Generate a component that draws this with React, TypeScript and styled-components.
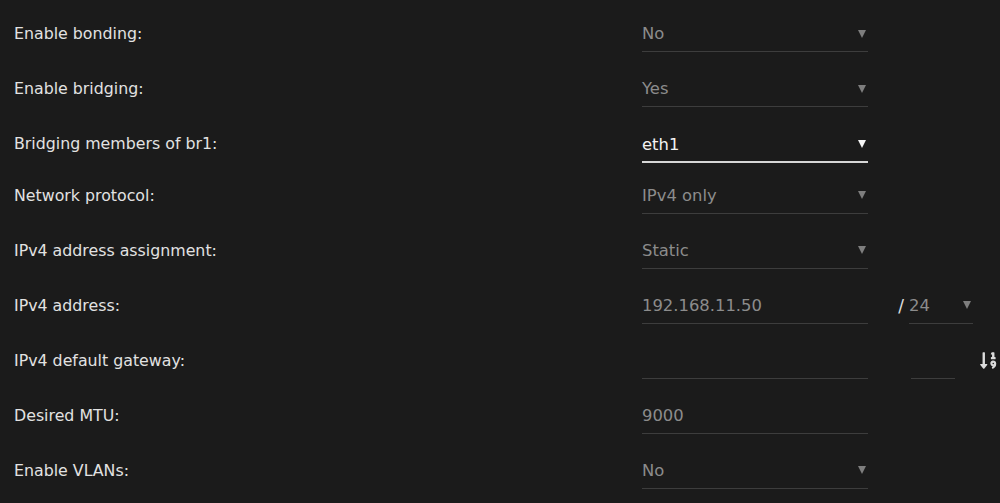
import React from "react";
import styled, { createGlobalStyle } from "styled-components";
import { FaSortNumericDown } from "react-icons/fa";

const Global = createGlobalStyle`
  html, body { margin: 0; padding: 0; background: #1b1b1b; }
  body { font-family: "DejaVu Sans", "Liberation Sans", sans-serif; font-size: 15.8px; }
`;

const Page = styled.div`
  width: 1000px;
  height: 503px;
  padding-top: 16px;
  box-sizing: border-box;
  overflow: hidden;
  display: flex;
  flex-direction: column;
  gap: 19px;
`;

const Row = styled.div<{ $tight?: boolean }>`
  display: flex;
  align-items: flex-end;
  height: 36px;
  flex-shrink: 0;
  margin-bottom: ${(p) => (p.$tight ? "-3.5px" : "0")};
`;

const Label = styled.div`
  width: 642px;
  padding-left: 14px;
  box-sizing: border-box;
  color: #e2e2e2;
  align-self: center;
  margin-top: -1px;
`;

const Field = styled.div<{ $active?: boolean; $width?: number }>`
  width: ${(p) => p.$width ?? 226}px;
  height: 36px;
  box-sizing: border-box;
  display: flex;
  align-items: center;
  justify-content: space-between;
  border-bottom: ${(p) => (p.$active ? "2px solid #d6d6d6" : "1px solid #3d3d3d")};
  color: ${(p) => (p.$active ? "#f2f2f2" : "#8c8c8c")};
  font-size: 16.4px;
  padding-right: 2px;
  margin-bottom: ${(p) => (p.$active ? "-1px" : "0")};
`;

const Arrow = styled.span<{ $active?: boolean }>`
  width: 0;
  height: 0;
  border-left: 4px solid transparent;
  border-right: 4px solid transparent;
  border-top: 8px solid ${(p) => (p.$active ? "#f5f5f5" : "#7e7e7e")};
`;

const Slash = styled.span`
  color: #e0e0e0;
  width: 41px;
  text-align: right;
  padding-right: 5px;
  box-sizing: border-box;
  align-self: center;
  font-size: 17px;
`;

const Spacer = styled.div`
  width: 43px;
`;

const SortIcon = styled.div`
  color: #dcdcdc;
  align-self: center;
  margin-left: 24px;
  display: flex;
  font-size: 19px;
`;

type Item = { label: string; value?: string; select?: boolean; active?: boolean; kind?: string };

const rows: Item[] = [
  { label: "Enable bonding:", value: "No", select: true },
  { label: "Enable bridging:", value: "Yes", select: true },
  { label: "Bridging members of br1:", value: "eth1", select: true, active: true },
  { label: "Network protocol:", value: "IPv4 only", select: true },
  { label: "IPv4 address assignment:", value: "Static", select: true },
  { label: "IPv4 address:", value: "192.168.11.50", kind: "addr" },
  { label: "IPv4 default gateway:", value: "", kind: "gw" },
  { label: "Desired MTU:", value: "9000" },
  { label: "Enable VLANs:", value: "No", select: true },
];

export default function App() {
  return (
    <>
      <Global />
      <Page>
        {rows.map((r) => (
          <Row key={r.label} $tight={r.active}>
            <Label>{r.label}</Label>
            <Field $active={r.active}>
              <span>{r.value}</span>
              {r.select && <Arrow $active={r.active} />}
            </Field>
            {r.kind === "addr" && (
              <>
                <Slash>/</Slash>
                <Field $width={64}>
                  <span>24</span>
                  <Arrow />
                </Field>
              </>
            )}
            {r.kind === "gw" && (
              <>
                <Spacer />
                <Field $width={44} />
                <SortIcon>
                  <FaSortNumericDown />
                </SortIcon>
              </>
            )}
          </Row>
        ))}
      </Page>
    </>
  );
}
